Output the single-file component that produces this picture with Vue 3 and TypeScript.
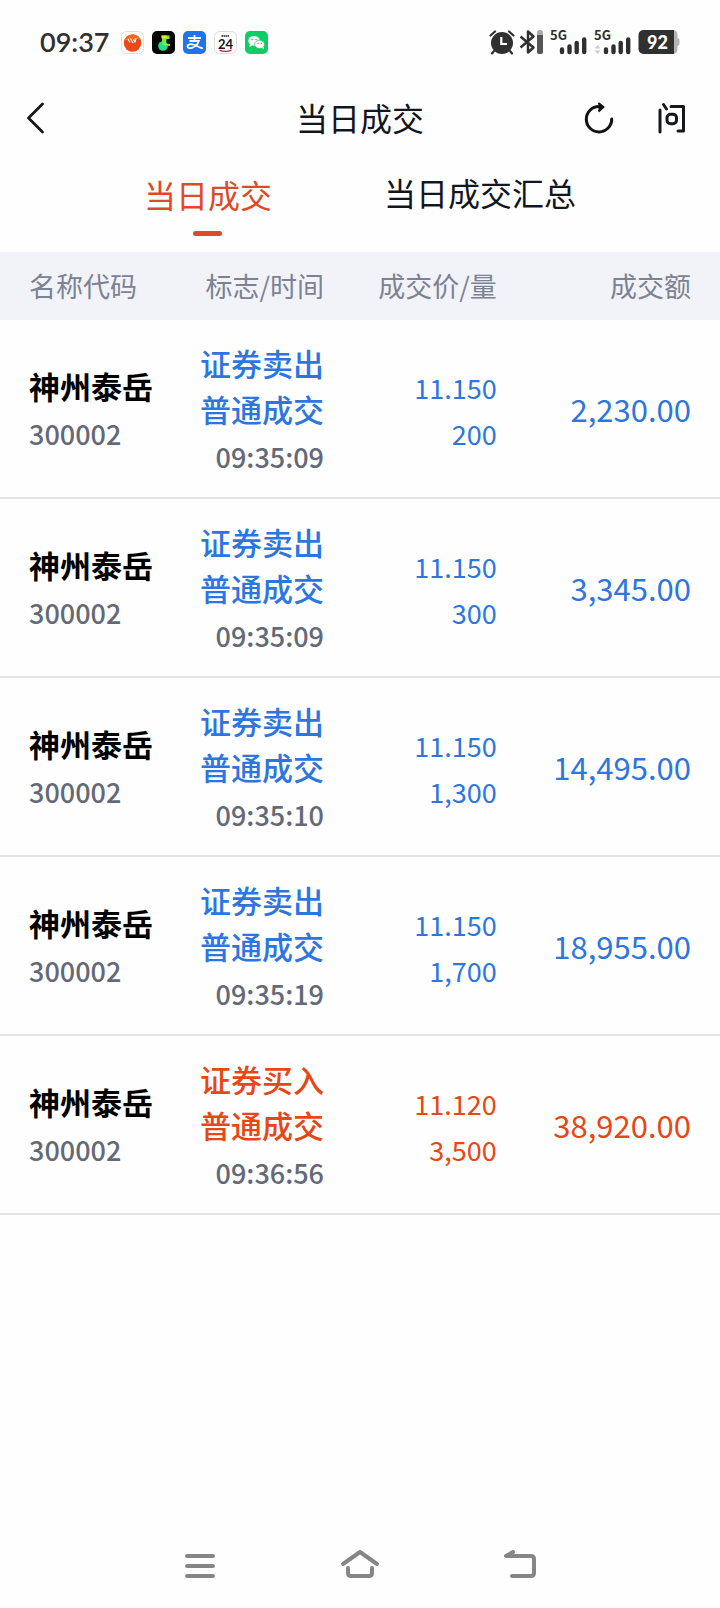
<script setup lang="ts">
import { ref } from 'vue'

type Side = 'sell' | 'buy'

interface Trade {
  side: Side
  flag: string
  time: string
  price: string
  volume: string
  amount: string
}

const tabs = ['当日成交', '当日成交汇总']
const activeTab = ref(0)

const trades: Trade[] = [
  { side: 'sell', flag: '证券卖出', time: '09:35:09', price: '11.150', volume: '200', amount: '2,230.00' },
  { side: 'sell', flag: '证券卖出', time: '09:35:09', price: '11.150', volume: '300', amount: '3,345.00' },
  { side: 'sell', flag: '证券卖出', time: '09:35:10', price: '11.150', volume: '1,300', amount: '14,495.00' },
  { side: 'sell', flag: '证券卖出', time: '09:35:19', price: '11.150', volume: '1,700', amount: '18,955.00' },
  { side: 'buy', flag: '证券买入', time: '09:36:56', price: '11.120', volume: '3,500', amount: '38,920.00' },
]
</script>

<template>
  <div class="screen">
    <div class="status">
      <div class="status-left">
        <span class="clock">09:37</span>
        <div class="apps">
          <svg class="app" viewBox="0 0 23 23">
            <rect x="0.5" y="0.5" width="22" height="22" rx="5" fill="#fff" stroke="#e2dedd" />
            <circle cx="11.5" cy="12" r="8.7" fill="#ee4818" />
            <path d="M3.200 10a8.700 8.700 0 0 1 16.500-.8q-8-3-16.500.8z" fill="#f4691f" />
            <path d="M7 8l2 3.500M9.500 7.500l2.500 4.500M12.500 8l1.500 3.500M15 7l-1 4" stroke="#fff" stroke-width="1.200" fill="none" />
          </svg>
          <svg class="app" viewBox="0 0 23 23">
            <rect width="23" height="23" rx="5" fill="#020402" />
            <circle cx="11" cy="15" r="4.800" fill="#1fe08a" />
            <path d="M9.500 4.500h8v3.500h-3l-.5 4.500 4 .5v2l-7-1z" fill="#8be83c" />
            <path d="M9.500 4.500h5.500l-1 3h-4.500z" fill="#e8e82c" />
            <path d="M11.500 7v6" stroke="#6be84c" stroke-width="2.500" />
          </svg>
          <svg class="app" viewBox="0 0 23 23">
            <rect width="23" height="23" rx="5" fill="#1f74ea" />
            <path d="M5 7h13M11.500 4v6M6.500 10h9.300c-1 3-3.500 5.600-6.300 6.700-2.300.9-5 .6-5-1.400 0-2.200 3.300-2.600 6-1.700 3 1 5.500 2.700 9.500 3.900" stroke="#fff" stroke-width="1.800" fill="none" />
          </svg>
          <svg class="app" viewBox="0 0 23 23">
            <rect x="0.5" y="0.5" width="22" height="22" rx="5" fill="#fff" stroke="#dcdcdc" />
            <path d="M7.500 5h8" stroke="#555" stroke-width="2" stroke-dasharray="1.500 .5" />
            <path d="M5.500 18.500q6 2.500 12 0v1.500q-6 2-12 0z" fill="#c2184b" />
            <text x="11.500" y="17.500" text-anchor="middle" class="date">24</text>
          </svg>
          <svg class="app" viewBox="0 0 23 23">
            <rect width="23" height="23" rx="5" fill="#10cc64" />
            <ellipse cx="9" cy="9.800" rx="5.700" ry="4.900" fill="#fff" />
            <path d="M5 13l-.8 3 3-1.500z" fill="#fff" />
            <ellipse cx="14.600" cy="13.400" rx="5" ry="4.200" fill="#fff" stroke="#10cc64" stroke-width=".7" />
            <path d="M17 17l2 1.500-.4-3z" fill="#fff" />
            <g fill="#10cc64">
              <circle cx="7.200" cy="8.500" r=".8" /><circle cx="11" cy="8.500" r=".8" />
              <circle cx="13" cy="12.400" r=".7" /><circle cx="16.300" cy="12.400" r=".7" />
            </g>
          </svg>
        </div>
      </div>
      <div class="status-right">
        <svg width="26" height="26" viewBox="0 0 26 26">
          <circle cx="13" cy="14" r="11" fill="#303030" />
          <path d="M1.500 6.500L6 2.500M24.500 6.500L20 2.500M5 22l-2 2.500M21 22l2 2.500" stroke="#303030" stroke-width="2.200" stroke-linecap="round" />
          <path d="M12.300 8v7H18" fill="none" stroke="#fff" stroke-width="2.200" />
        </svg>
        <svg class="bt" width="25" height="26" viewBox="0 0 25 26">
          <path d="M1.500 7.500l13 11-5.500 5V2.500l5.500 5-13 11" fill="none" stroke="#303030" stroke-width="2.500" stroke-linejoin="round" />
          <rect x="18" y="1" width="6" height="24" rx="2.500" fill="#aaa" />
          <path d="M18 6h6v16.500a2.500 2.500 0 0 1-2.500 2.500h-1a2.500 2.500 0 0 1-2.500-2.500z" fill="#555" />
        </svg>
        <svg v-for="n in 2" :key="n" class="signal" width="38" height="38" viewBox="0 -6 38 38">
          <text x="0" y="11" class="net">5G</text>
          <path d="M12 20.500v2.500M19.500 17.500v5.500M26.700 14v9M34.200 10.500v12.500" stroke="#303030" stroke-width="4.400" stroke-linecap="round" />
          <path v-if="n === 2" d="M.5 19.500l3-3.500 3 3.500zM.5 21.500l3 3.500 3-3.500z" fill="#ccc" />
        </svg>
        <svg class="battery" width="42" height="26" viewBox="0 0 42 26">
          <path d="M34 1h1a4.500 4.500 0 0 1 4.500 4.500V9q2 .5 2 2v4q0 1.500-2 2v3.500A4.500 4.500 0 0 1 35 25h-1z" fill="#b4b4b4" />
          <path d="M5.500 1H36v24H5.500A5 5 0 0 1 .5 20V6a5 5 0 0 1 5-5z" fill="#303030" />
          <text x="19.500" y="19.500" text-anchor="middle" class="charge">92</text>
        </svg>
      </div>
    </div>

    <header class="bar">
      <div class="bar-side">
        <button class="icon" aria-label="返回">
          <svg width="20" height="34" viewBox="0 0 20 34">
            <path d="M16.500 3L2.500 17l14 14" fill="none" stroke="#15181c" stroke-width="2.800" stroke-linecap="round" stroke-linejoin="round" />
          </svg>
        </button>
      </div>
      <h1 class="title">当日成交</h1>
      <div class="bar-side end">
        <button class="icon" aria-label="刷新">
          <svg width="30" height="34" viewBox="0 0 30 34">
            <path d="M15 5.500A12.700 12.700 0 1 0 27.700 18" fill="none" stroke="#111" stroke-width="3" stroke-linecap="round" />
            <path d="M14.500 2l5 4-5 4.500" fill="#111" stroke="#111" stroke-width="2" stroke-linejoin="round" />
          </svg>
        </button>
        <button class="icon" aria-label="问">
          <svg width="30" height="34" viewBox="0 0 30 34" fill="none" stroke="#15181c" stroke-width="3" stroke-linecap="round" stroke-linejoin="round">
            <path d="M3 9v22M6.500 3.500l3 4.500M14 5.500h12.500V30h-5.500" />
            <rect x="10" y="13.300" width="9.500" height="9.500" rx="3.500" />
          </svg>
        </button>
      </div>
    </header>

    <nav class="tabs">
      <button
        v-for="(tab, i) in tabs"
        :key="tab"
        class="tab"
        :class="{ active: i === activeTab }"
        @click="activeTab = i"
      >{{ tab }}</button>
    </nav>

    <table class="trades">
      <colgroup>
        <col class="c1"><col class="c2"><col class="c3"><col class="c4">
      </colgroup>
      <thead>
        <tr>
          <th>名称代码</th>
          <th>标志/时间</th>
          <th>成交价/量</th>
          <th>成交额</th>
        </tr>
      </thead>
      <tbody>
        <tr v-for="(t, i) in trades" :key="i" :class="t.side">
          <td>
            <div class="name">神州泰岳</div>
            <div><span class="small muted">300002</span></div>
          </td>
          <td>
            <div class="flag">{{ t.flag }}</div>
            <div class="flag">普通成交</div>
            <div><span class="small muted">{{ t.time }}</span></div>
          </td>
          <td>
            <div><span class="small">{{ t.price }}</span></div>
            <div><span class="small">{{ t.volume }}</span></div>
          </td>
          <td>{{ t.amount }}</td>
        </tr>
      </tbody>
    </table>

    <footer class="system">
      <button class="icon" aria-label="最近任务">
        <svg width="40" height="36" viewBox="0 0 40 36">
          <path d="M7 8h26M7 18h26M7 28h26" stroke="#868686" stroke-width="4" stroke-linecap="round" />
        </svg>
      </button>
      <button class="icon" aria-label="主页">
        <svg width="40" height="36" viewBox="0 0 40 36" fill="none" stroke="#868686" stroke-width="4" stroke-linecap="round" stroke-linejoin="round">
          <path d="M3 16L20 4l17 12M8 20v5q0 3 3 3h18q3 0 3-3v-5" />
        </svg>
      </button>
      <button class="icon" aria-label="后退">
        <svg width="40" height="36" viewBox="0 0 40 36" fill="none" stroke="#868686" stroke-width="4" stroke-linecap="round" stroke-linejoin="round">
          <path d="M13 4L6 8h25q3 0 3 3v14q0 3-3 3H12" />
        </svg>
      </button>
    </footer>
  </div>
</template>

<style>
body {
  background: #fefefe;
}
</style>

<style scoped>
.screen {
  display: flex;
  flex-direction: column;
  min-height: 100vh;
  background: #fefefe;
  color: #12161e;
  font-family: "Noto Sans CJK SC", "Noto Sans", sans-serif;
}

svg {
  display: block;
}

.status,
.status-left,
.status-right,
.apps {
  display: flex;
  align-items: center;
}

.status {
  justify-content: space-between;
  height: 84px;
  padding: 0 40px;
}

.status-left {
  gap: 11px;
}

.clock {
  font: 600 27px/32px Lato, sans-serif;
  color: #303030;
}

.apps {
  gap: 8px;
}

.app {
  width: 23px;
  height: 23px;
}

.date {
  font: 700 13px Lato, sans-serif;
  fill: #151515;
}

.bt {
  margin-left: 4px;
}

.signal {
  margin-left: 6px;
}

.net {
  font: 700 13px "Noto Sans CJK SC", sans-serif;
  fill: #303030;
}

.battery {
  margin-left: 6px;
}

.charge {
  font: 900 18px Lato, sans-serif;
  fill: #fff;
}

.bar {
  display: grid;
  grid-template-columns: 1fr auto 1fr;
  align-items: center;
  height: 68px;
  padding: 0 26px;
}

.bar-side {
  display: flex;
}

.end {
  justify-content: flex-end;
  gap: 43px;
  padding-right: 7px;
}

.icon {
  padding: 0;
  border: 0;
  background: none;
}

.title {
  margin: 0;
  padding-bottom: 2px;
  font-size: 32px;
  line-height: 48px;
  font-weight: 400;
}

.tabs {
  display: flex;
  justify-content: center;
  align-items: flex-start;
  gap: 112px;
  height: 100px;
}

.tab {
  padding: 16px 0 0;
  border: 0;
  background: none;
  color: inherit;
  font: inherit;
  font-size: 32px;
  line-height: 48px;
}

.active {
  padding-top: 18px;
  color: #dc4a26;
}

.active::after {
  content: "";
  display: block;
  width: 29px;
  height: 5px;
  margin: 13px auto 0;
  border-radius: 3px;
  background: #dc4a26;
}

.trades {
  width: 100%;
  border-collapse: collapse;
  table-layout: fixed;
}

.c1 { width: 25%; }
.c2 { width: 20%; }
.c3 { width: 24%; }
.c4 { width: 31%; }

th,
td {
  padding: 0;
  text-align: right;
}

th:first-child,
td:first-child {
  padding-left: 29px;
  text-align: left;
}

th:last-child,
td:last-child {
  padding-right: 29px;
}

th {
  height: 66px;
  padding-bottom: 2px;
  background: #f2f3f8;
  color: #7b8294;
  font-size: 27px;
  font-weight: 400;
}

td {
  height: 177px;
  border-bottom: 2px solid #e3e4e6;
  font-size: 31px;
  line-height: 46px;
}

.name {
  color: #000;
  font-weight: 700;
}

.flag {
  font-weight: 500;
}

.small {
  font-size: 27px;
  line-height: 27px;
}

.muted {
  color: #636977;
  font-weight: 500;
}

.sell {
  color: #2d76e0;
}

.buy {
  color: #e64714;
}

.system {
  display: flex;
  justify-content: center;
  gap: 120px;
  margin-top: auto;
  padding-bottom: 24px;
}
</style>
